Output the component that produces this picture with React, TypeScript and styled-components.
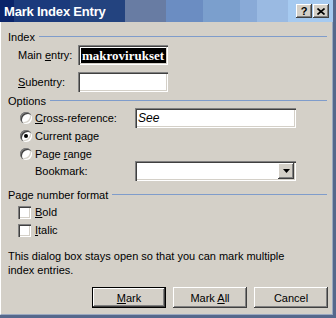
import React from "react";
import styled, { createGlobalStyle } from "styled-components";

const GlobalStyle = createGlobalStyle`
  html, body {
    margin: 0;
    padding: 0;
    background: #d4d0c8;
  }
  body {
    font-family: "Liberation Sans", Arial, sans-serif;
    font-size: 11px;
    color: #000;
  }
`;

const raised = `
  box-shadow: inset -1px -1px 0 #404040, inset 1px 1px 0 #ffffff,
    inset -2px -2px 0 #808080, inset 2px 2px 0 #d4d0c8;
`;

const sunken = `
  box-shadow: inset 1px 1px 0 #808080, inset 2px 2px 0 #404040,
    inset -1px -1px 0 #ffffff, inset -2px -2px 0 #d4d0c8;
`;

const Window = styled.div`
  width: 336px;
  height: 318px;
  box-sizing: border-box;
  display: flex;
  flex-direction: column;
  background: #d4d0c8;
  border-right: 3px solid #55688c;
  border-bottom: 3px solid #55688c;
  overflow: hidden;
`;

const TitleBar = styled.div`
  height: 22px;
  flex: none;
  display: flex;
  align-items: center;
  padding: 0 4px 0 4px;
  color: #fff;
  background: linear-gradient(
    to right,
    #0a246a 0px,
    #0a246a 14px,
    #1b3a7c 14px,
    #1b3a7c 70px,
    #23437f 70px,
    #23437f 125px,
    #687ca3 125px,
    #687ca3 166px,
    #6b8dc2 166px,
    #6b8dc2 203px,
    #7b9fcd 203px,
    #7b9fcd 240px,
    #89aad7 240px,
    #89aad7 257px,
    #9abae2 257px,
    #9abae2 288px,
    #a6caf0 288px
  );
`;

const Title = styled.span`
  flex: 1;
  font: bold 13px "Liberation Sans", Arial, sans-serif;
  letter-spacing: -0.2px;
  white-space: nowrap;
`;

const CaptionButtons = styled.div`
  display: flex;
  gap: 1px;
`;

const CaptionButton = styled.div`
  width: 16px;
  height: 14px;
  box-sizing: border-box;
  display: flex;
  align-items: center;
  justify-content: center;
  background: #d4d0c8;
  color: #000;
  font: bold 11px "Liberation Sans", Arial, sans-serif;
  ${raised}
`;

const Body = styled.div`
  flex: 1;
  display: flex;
  flex-direction: column;
  padding: 0 4px 0 7px;
  border-left: 1px solid #ffffff;
  border-right: 1px solid #9aa8c0;
  border-bottom: 1px solid #9aa8c0;
`;

const GroupHeader = styled.div<{ $top: number }>`
  display: flex;
  align-items: center;
  height: 13px;
  margin-top: ${(p) => p.$top}px;
  white-space: nowrap;

  &::after {
    content: "";
    flex: 1;
    height: 1px;
    margin-left: 4px;
    margin-right: 1px;
    background: #7f9ccb;
  }
`;

const Row = styled.div<{ $top: number; $indent: number; $h: number }>`
  display: flex;
  align-items: center;
  height: ${(p) => p.$h}px;
  margin-top: ${(p) => p.$top}px;
  padding-left: ${(p) => p.$indent}px;
`;

const Label = styled.span<{ $w?: number }>`
  flex: none;
  width: ${(p) => (p.$w ? `${p.$w}px` : "auto")};
  white-space: nowrap;
`;

const TextBox = styled.div<{ $w: number }>`
  flex: none;
  width: ${(p) => p.$w}px;
  height: 20px;
  box-sizing: border-box;
  display: flex;
  align-items: center;
  padding: 0 2px;
  background: #fff;
  ${sunken}
`;

const Selected = styled.span`
  flex: 1;
  height: 15px;
  line-height: 15px;
  padding-left: 1px;
  border-left: 1px solid #fff;
  background: #000;
  color: #fff;
  font: bold 13px "Liberation Serif", "Times New Roman", serif;
  white-space: nowrap;
  overflow: hidden;
`;

const Placeholder = styled.span`
  padding-left: 1px;
  font: italic 12px "Liberation Sans", Arial, sans-serif;
`;

const DropButton = styled.div`
  margin-left: auto;
  width: 16px;
  height: 16px;
  box-sizing: border-box;
  display: flex;
  align-items: center;
  justify-content: center;
  background: #d4d0c8;
  ${raised}
`;

const Radio = styled.span<{ $checked?: boolean }>`
  position: relative;
  flex: none;
  width: 12px;
  height: 12px;
  margin-right: 3px;
  border-radius: 50%;
  background: #fff;
  ${sunken}

  &::after {
    content: "";
    display: ${(p) => (p.$checked ? "block" : "none")};
    position: absolute;
    left: 4px;
    top: 4px;
    width: 4px;
    height: 4px;
    border-radius: 50%;
    background: #000;
  }
`;

const Check = styled.span`
  flex: none;
  width: 13px;
  height: 13px;
  margin-right: 4px;
  box-sizing: border-box;
  background: #fff;
  ${sunken}
`;

const Note = styled.p`
  margin: 12px 0 0 0;
  line-height: 14px;
  white-space: nowrap;
`;

const ButtonRow = styled.div`
  display: flex;
  justify-content: flex-end;
  gap: 7px;
  margin-top: 10px;
`;

const Button = styled.button<{ $default?: boolean }>`
  width: 74px;
  height: 21px;
  box-sizing: border-box;
  padding: 0;
  background: #d4d0c8;
  color: #000;
  font: 11px "Liberation Sans", Arial, sans-serif;
  border: ${(p) => (p.$default ? "1px solid #000" : "none")};
  ${raised}
`;

const App = () => {
  return (
    <>
      <GlobalStyle />
      <Window>
        <TitleBar>
          <Title>Mark Index Entry</Title>
          <CaptionButtons>
            <CaptionButton>?</CaptionButton>
            <CaptionButton>
              <svg width="8" height="7" viewBox="0 0 8 7">
                <path d="M0.5 0.5L7.5 6.5M7.5 0.5L0.5 6.5" stroke="#000" strokeWidth="1.6" />
              </svg>
            </CaptionButton>
          </CaptionButtons>
        </TitleBar>
        <Body>
          <GroupHeader $top={8}>Index</GroupHeader>
          <Row $top={2} $indent={10} $h={20}>
            <Label $w={60}>
              Main <u>e</u>ntry:
            </Label>
            <TextBox $w={90}>
              <Selected>makrovirukset</Selected>
            </TextBox>
          </Row>
          <Row $top={7} $indent={10} $h={20}>
            <Label $w={60}>
              <u>S</u>ubentry:
            </Label>
            <TextBox $w={90} />
          </Row>

          <GroupHeader $top={2}>Options</GroupHeader>
          <Row $top={1} $indent={12} $h={20}>
            <Radio />
            <Label $w={100}>
              <u>C</u>ross-reference:
            </Label>
            <TextBox $w={161}>
              <Placeholder>See</Placeholder>
            </TextBox>
          </Row>
          <Row $top={1} $indent={12} $h={14}>
            <Radio $checked />
            <Label>
              Current <u>p</u>age
            </Label>
          </Row>
          <Row $top={4} $indent={12} $h={14}>
            <Radio />
            <Label>
              Page <u>r</u>ange
            </Label>
          </Row>
          <Row $top={0} $indent={27} $h={20}>
            <Label $w={100}>Bookmark:</Label>
            <TextBox $w={161}>
              <DropButton>
                <svg width="7" height="4" viewBox="0 0 7 4">
                  <path d="M0 0H7L3.5 4Z" fill="#000" />
                </svg>
              </DropButton>
            </TextBox>
          </Row>

          <GroupHeader $top={7}>Page number format</GroupHeader>
          <Row $top={4} $indent={10} $h={14}>
            <Check />
            <Label>
              <u>B</u>old
            </Label>
          </Row>
          <Row $top={4} $indent={10} $h={14}>
            <Check />
            <Label>
              <u>I</u>talic
            </Label>
          </Row>

          <Note>
            This dialog box stays open so that you can mark multiple
            <br />
            index entries.
          </Note>

          <ButtonRow>
            <Button $default>
              <u>M</u>ark
            </Button>
            <Button>
              Mark <u>A</u>ll
            </Button>
            <Button>Cancel</Button>
          </ButtonRow>
        </Body>
      </Window>
    </>
  );
};

export default App;
